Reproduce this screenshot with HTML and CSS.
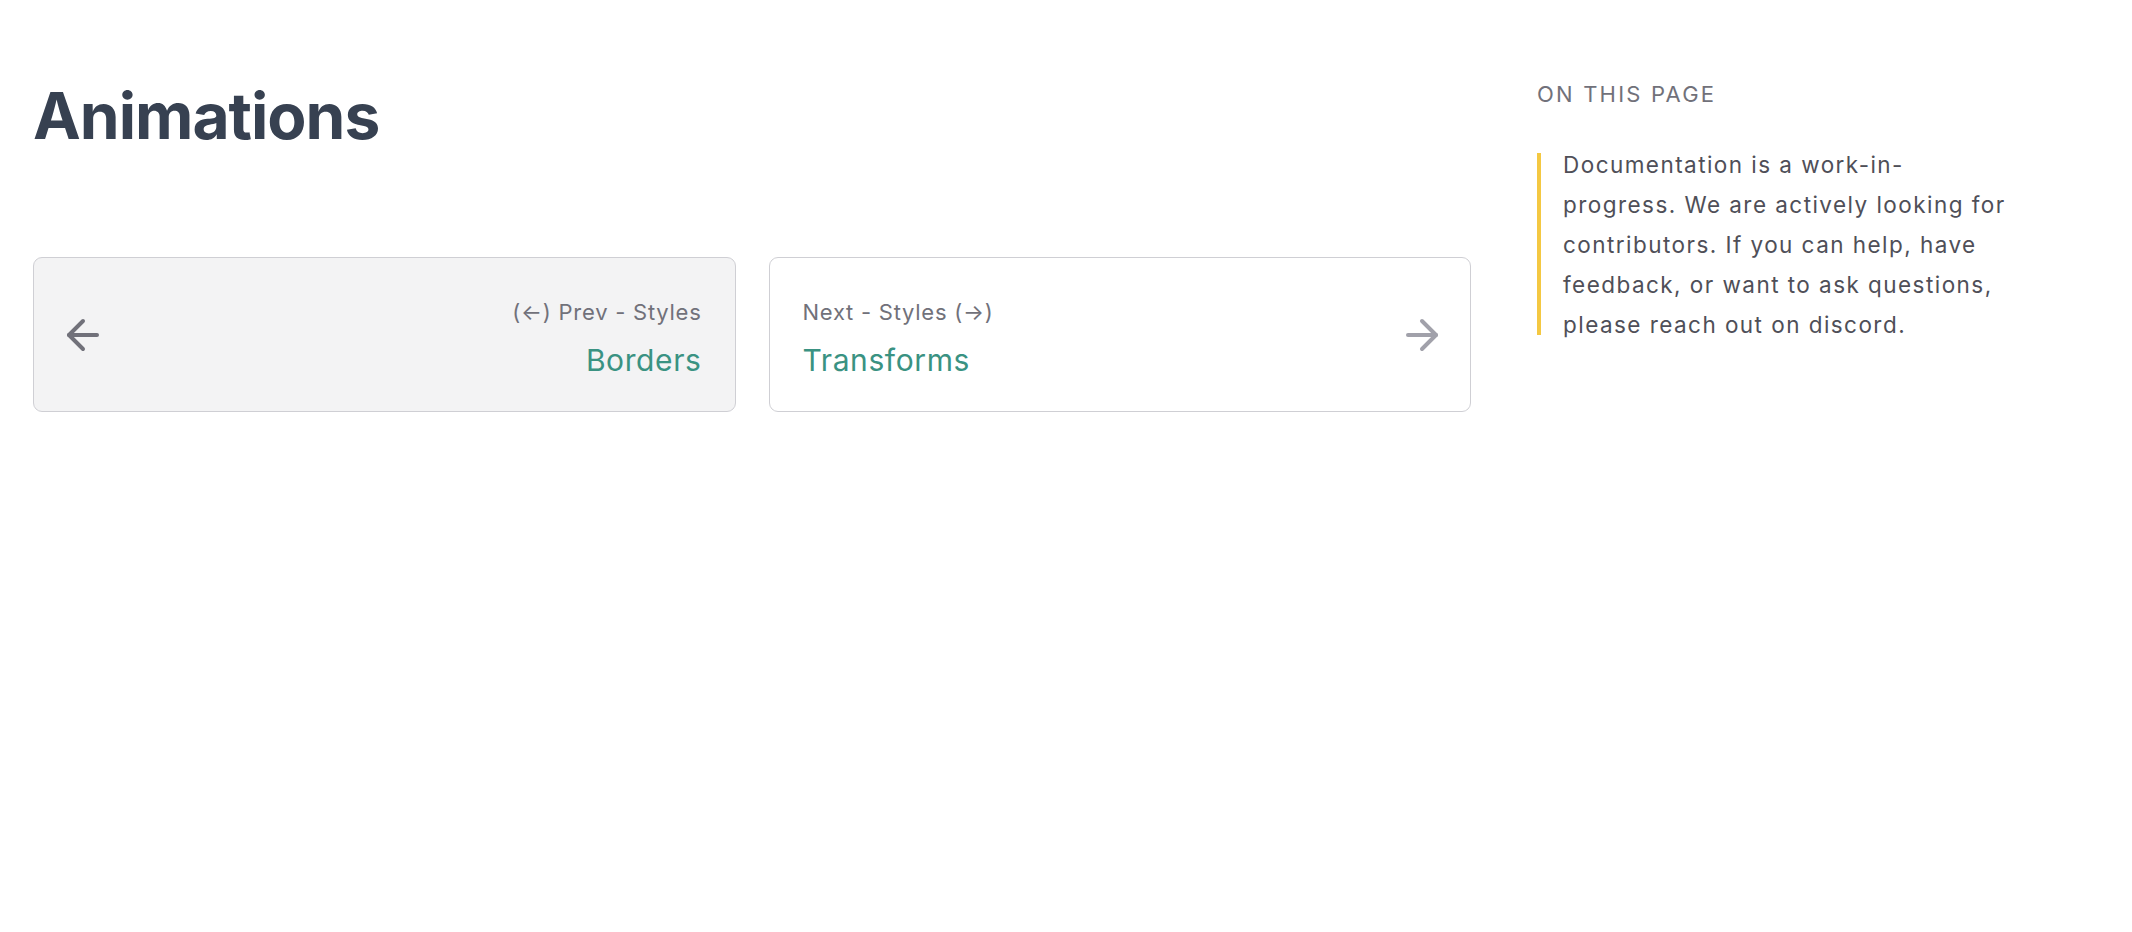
FILE: index.html
```html
<!DOCTYPE html>
<html lang="en">
<head>
<meta charset="utf-8">
<title>Animations</title>
<link rel="stylesheet" href="styles.css">
</head>
<body>
<div class="page">
  <main class="content">
    <h1 class="title">Animations</h1>
    <nav class="pager">
      <a class="card card-prev" href="#">
        <svg class="icon icon-prev" viewBox="0 0 24 24" fill="none" stroke="currentColor" stroke-width="2" stroke-linecap="round" stroke-linejoin="round"><path d="M19 12H5"/><path d="M12 19l-7-7 7-7"/></svg>
        <span class="card-text card-text-end">
          <span class="card-label">(←) Prev - Styles</span>
          <span class="card-title">Borders</span>
        </span>
      </a>
      <a class="card card-next" href="#">
        <span class="card-text">
          <span class="card-label">Next - Styles (→)</span>
          <span class="card-title">Transforms</span>
        </span>
        <svg class="icon icon-next" viewBox="0 0 24 24" fill="none" stroke="currentColor" stroke-width="2" stroke-linecap="round" stroke-linejoin="round"><path d="M5 12h14"/><path d="M12 5l7 7-7 7"/></svg>
      </a>
    </nav>
  </main>
  <aside class="toc">
    <div class="toc-heading">ON THIS PAGE</div>
    <div class="notice">
      <div class="notice-bar"></div>
      <p class="notice-text">Documentation is a work-in-progress. We are actively looking for contributors. If you can help, have feedback, or want to ask questions, please reach out on discord.</p>
    </div>
  </aside>
</div>
</body>
</html>
```

FILE: styles.css
```css
* { box-sizing: border-box; }

html, body {
  margin: 0;
  padding: 0;
  background: #ffffff;
}

body {
  font-family: Inter, "Noto Sans", "Liberation Sans", sans-serif;
  color: #52525b;
}

.page {
  display: flex;
  align-items: flex-start;
  gap: 66px;
  padding: 0 33px;
}

.content {
  width: 1438px;
  flex: none;
  padding-top: 77px;
}

.title {
  margin: 0;
  font-size: 64px;
  line-height: 77px;
  font-weight: 700;
  color: #374151;
  letter-spacing: -1px;
}

.pager {
  margin-top: 103px;
  display: grid;
  grid-template-columns: 1fr 1fr;
  gap: 33px;
}

.card {
  display: flex;
  align-items: center;
  justify-content: space-between;
  height: 155px;
  padding: 0 33px;
  border: 1.5px solid #cfcfd4;
  border-radius: 9px;
  text-decoration: none;
  background: #ffffff;
}

.card-prev {
  background: #f3f3f4;
}

.icon {
  width: 48px;
  height: 48px;
  flex: none;
}

.icon-prev {
  color: #71717a;
  margin-left: -8px;
}

.icon-next {
  color: #a1a1aa;
  margin-right: -9px;
}

.card-text {
  display: flex;
  flex-direction: column;
  gap: 12px;
  padding-top: 7px;
}

.card-text-end {
  align-items: flex-end;
}

.card-label {
  font-size: 22px;
  line-height: 32px;
  letter-spacing: 0.75px;
  color: #71717a;
}

.card-title {
  font-size: 30px;
  line-height: 40px;
  letter-spacing: 0.6px;
  color: #3a9282;
}

.toc {
  width: 480px;
  flex: none;
  padding-top: 78px;
}

.toc-heading {
  font-size: 22px;
  line-height: 33px;
  letter-spacing: 2.2px;
  color: #71717a;
  font-weight: 400;
}

.notice {
  display: flex;
  margin-top: 34px;
}

.notice-bar {
  width: 4px;
  flex: none;
  margin: 8px 0 10px;
  background: #f4c842;
}

.notice-text {
  width: 472px;
  margin: 0;
  padding-left: 22px;
  font-size: 22.5px;
  line-height: 40px;
  letter-spacing: 1.45px;
  color: #4f4f58;
}
```
